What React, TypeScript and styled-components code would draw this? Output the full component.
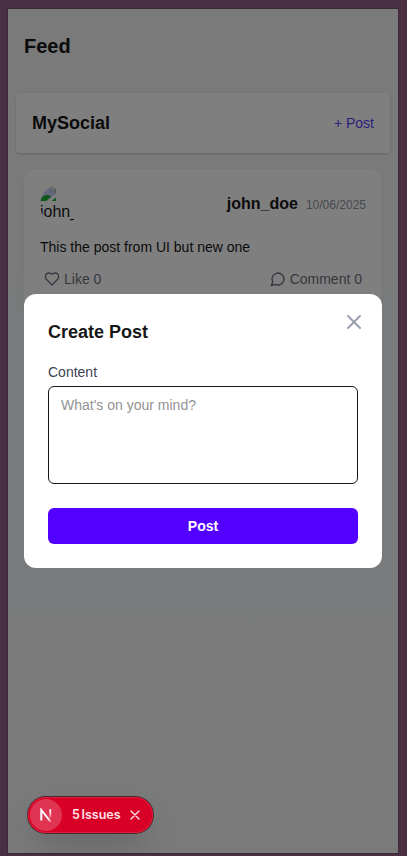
import React from 'react';
import styled, { createGlobalStyle } from 'styled-components';

const GlobalStyle = createGlobalStyle`
  *, *::before, *::after { box-sizing: border-box; }
  body { margin: 0; font-family: "Liberation Sans", Arial, sans-serif; color: #171717; }
  h1, h2, p { margin: 0; }
  button, textarea { font-family: inherit; }
`;

const Frame = styled.div`
  height: 856px;
  padding: 9px 9px 3px 8px;
  background: #4b3044;
`;

const Screen = styled.div`
  position: relative;
  width: 390px;
  height: 844px;
  background: linear-gradient(#f4f4f4, #f3f5f6 35%, #f3f5f6 70%, #f4f4f4);
  box-shadow: 0 0 0 1px #3a2a38;
`;

const PageTitle = styled.h1`
  padding: 23px 16px 33px;
  font-size: 20px;
  line-height: 28px;
`;

const NavBar = styled.header`
  display: flex;
  align-items: center;
  justify-content: space-between;
  height: 60px;
  margin: 0 8px;
  padding: 0 16px;
  border-radius: 4px;
  background: #fff;
  box-shadow: 0 1px 3px rgba(0, 0, 0, 0.1), 0 1px 2px rgba(0, 0, 0, 0.08);
`;

const Brand = styled.h2`
  font-size: 18px;
  line-height: 28px;
`;

const NavButton = styled.button`
  padding: 0;
  border: 0;
  background: none;
  color: #5a3ff8;
  font-size: 14px;
  line-height: 20px;
`;

const PostCard = styled.article`
  height: 150px;
  margin: 16px 16px 0;
  padding: 16px;
  border-radius: 12px;
  background: #fff;
  box-shadow: 0 1px 3px rgba(0, 0, 0, 0.05), 0 1px 2px rgba(0, 0, 0, 0.04);
`;

const PostHeader = styled.div`
  display: flex;
  align-items: center;
  justify-content: space-between;
  height: 40px;
`;

const Avatar = styled.div`
  width: 40px;
  height: 40px;
  border-radius: 50%;
  overflow: hidden;
  font-size: 16px;
  line-height: 21px;

  svg { display: block; }
`;

const Byline = styled.div`
  display: flex;
  align-items: baseline;
  gap: 8px;
  padding-bottom: 2px;
`;

const Author = styled.span`
  font-size: 16px;
  line-height: 24px;
  font-weight: 700;
`;

const PostDate = styled.span`
  color: #8a91a0;
  font-size: 12px;
`;

const PostText = styled.p`
  margin-top: 12px;
  font-size: 14px;
  line-height: 20px;
`;

const Actions = styled.div`
  display: flex;
  justify-content: space-between;
  margin-top: 12px;
  padding: 0 4px;
`;

const Action = styled.button`
  display: flex;
  align-items: center;
  gap: 4px;
  padding: 0;
  border: 0;
  background: none;
  color: #6d7080;
  font-size: 14px;
  line-height: 20px;
`;

const Backdrop = styled.div`
  position: absolute;
  inset: 0;
  display: flex;
  align-items: center;
  padding: 0 16px;
  background: rgba(0, 0, 0, 0.5);
`;

const Dialog = styled.section`
  position: relative;
  width: 100%;
  height: 274px;
  padding: 24px;
  border-radius: 12px;
  background: #fff;
`;

const DialogTitle = styled.h2`
  font-size: 18px;
  line-height: 28px;
`;

const CloseButton = styled.button`
  position: absolute;
  top: 16px;
  right: 16px;
  padding: 0;
  border: 0;
  background: none;
  color: #9a9fb2;

  svg { display: block; }
`;

const Label = styled.label`
  display: block;
  margin: 16px 0 4px;
  color: #3d4253;
  font-size: 14px;
  line-height: 20px;
`;

const TextArea = styled.textarea`
  display: block;
  width: 100%;
  height: 98px;
  padding: 8px 12px;
  border: 1px solid #171717;
  border-radius: 6px;
  background: #fff;
  font-size: 14px;
  line-height: 20px;
  resize: none;

  &::placeholder { color: #939393; opacity: 1; }
`;

const SubmitButton = styled.button`
  width: 100%;
  height: 36px;
  margin-top: 24px;
  border: 0;
  border-radius: 6px;
  background: #5200ff;
  color: #fff;
  font-size: 14px;
  font-weight: 700;
`;

const IssueBadge = styled.div`
  position: absolute;
  left: 20px;
  bottom: 20px;
  display: flex;
  align-items: center;
  width: 125px;
  height: 36px;
  padding: 2px;
  border-radius: 18px;
  background: #d80027;
  color: #fff;
  box-shadow: 0 0 0 1px #462c31, inset 0 0 0 1px #df1c3c,
    0 16px 32px -8px rgba(0, 0, 0, 0.24);
`;

const BadgeLogo = styled.div`
  display: flex;
  align-items: center;
  justify-content: center;
  width: 32px;
  height: 32px;
  border-radius: 50%;
  background: #e03453;
`;

const BadgeText = styled.span`
  width: 50px;
  margin: 0 8px 0 10px;
  color: #ffe3e7;
  font: 600 12.5px/16px Inter, sans-serif;
  word-spacing: -1.5px;
  white-space: nowrap;
`;

const HeartIcon = () => (
  <svg width="16" height="16" viewBox="0 0 24 24" fill="none" stroke="currentColor" strokeWidth="2" strokeLinecap="round" strokeLinejoin="round">
    <path d="M19 14c1.49-1.46 3-3.21 3-5.5A5.5 5.5 0 0 0 16.5 3c-1.76 0-3 .5-4.5 2-1.5-1.5-2.74-2-4.5-2A5.5 5.5 0 0 0 2 8.5c0 2.3 1.5 4.05 3 5.5l7 7Z" />
  </svg>
);

const CommentIcon = () => (
  <svg width="16" height="16" viewBox="0 0 24 24" fill="none" stroke="currentColor" strokeWidth="2" strokeLinecap="round" strokeLinejoin="round">
    <path d="M7.9 20A9 9 0 1 0 4 16.1L2 22Z" />
  </svg>
);

const MissingImageIcon = () => (
  <svg width="16" height="16" viewBox="0 0 16 16">
    <path d="M0 0h11l5 5v11H0z" fill="#c3cdf0" />
    <path d="M11 0l5 5h-5z" fill="#f3f3f3" stroke="#aaa" strokeWidth=".8" />
    <path d="M15.5 5v4" stroke="#aaa" />
    <path d="M0 16q2-6 7-6 3 0 4 2l-5 4z" fill="#1fb036" />
    <path d="M6.5 16L16 8.5v4L12 16z" fill="#fff" />
    <path d="M11.5 16l4.5-3.5V16z" fill="#1fb036" />
  </svg>
);

export default function App() {
  return (
    <>
      <GlobalStyle />
      <Frame>
        <Screen>
          <PageTitle>Feed</PageTitle>
          <NavBar>
            <Brand>MySocial</Brand>
            <NavButton>+ Post</NavButton>
          </NavBar>
          <PostCard>
            <PostHeader>
              <Avatar><MissingImageIcon />john_</Avatar>
              <Byline>
                <Author>john_doe</Author>
                <PostDate>10/06/2025</PostDate>
              </Byline>
            </PostHeader>
            <PostText>This the post from UI but new one</PostText>
            <Actions>
              <Action><HeartIcon />Like 0</Action>
              <Action><CommentIcon />Comment 0</Action>
            </Actions>
          </PostCard>
          <Backdrop>
            <Dialog role="dialog">
              <DialogTitle>Create Post</DialogTitle>
              <CloseButton aria-label="Close">
                <svg width="24" height="24" viewBox="0 0 24 24" fill="none" stroke="currentColor" strokeWidth="2" strokeLinecap="round">
                  <path d="M6 6l12 12M18 6L6 18" />
                </svg>
              </CloseButton>
              <Label htmlFor="content">Content</Label>
              <TextArea id="content" placeholder="What's on your mind?" />
              <SubmitButton>Post</SubmitButton>
            </Dialog>
          </Backdrop>
          <IssueBadge>
            <BadgeLogo>
              <svg width="14" height="14" viewBox="0 0 14 14" fill="none">
                <defs>
                  <linearGradient id="diagonal" x1="7" y1="7" x2="12" y2="14" gradientUnits="userSpaceOnUse">
                    <stop offset=".5" stopColor="#fff" />
                    <stop offset="1" stopColor="#fff" stopOpacity=".3" />
                  </linearGradient>
                  <linearGradient id="stem" x1="0" y1="1" x2="0" y2="11" gradientUnits="userSpaceOnUse">
                    <stop offset=".3" stopColor="#fff" />
                    <stop offset="1" stopColor="#fff" stopOpacity="0" />
                  </linearGradient>
                </defs>
                <path d="M2.3 12.5V2l9.4 11.8" stroke="url(#diagonal)" strokeWidth="2" />
                <path d="M11.3 1.2V10" stroke="url(#stem)" strokeWidth="1.7" />
              </svg>
            </BadgeLogo>
            <BadgeText>5 Issues</BadgeText>
            <svg width="10" height="10" viewBox="0 0 10 10" fill="none" stroke="#ffe3e7" strokeWidth="1.4" strokeLinecap="round">
              <path d="M1 1l8 8M9 1L1 9" />
            </svg>
          </IssueBadge>
        </Screen>
      </Frame>
    </>
  );
}
